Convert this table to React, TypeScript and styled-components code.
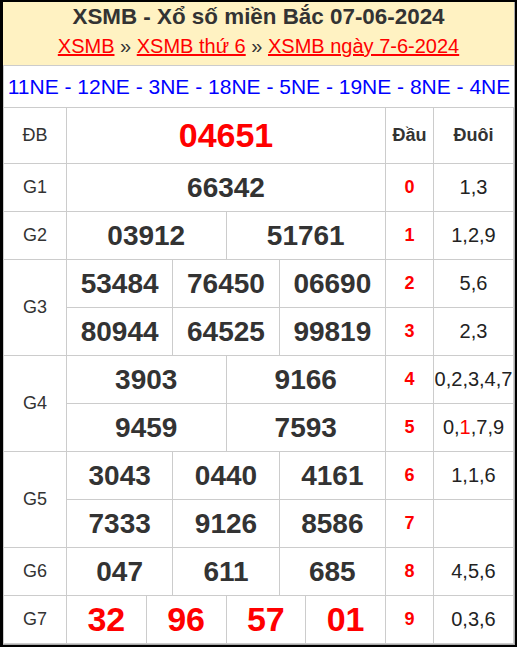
import React from "react";
import styled, { createGlobalStyle } from "styled-components";

const Global = createGlobalStyle`
  html, body { margin: 0; padding: 0; background: #000; }
  body { font-family: "Liberation Sans", Arial, sans-serif; }
  * { box-sizing: border-box; }
`;

const Frame = styled.div`
  margin: 2px 0 0 3px;
  width: 512px;
  height: 643px;
  background: #fff;
  border-right: 1px solid #aaa;
  border-bottom: 1px solid #aaa;
  overflow: hidden;
  display: flex;
  flex-direction: column;
`;

const Header = styled.div`
  height: 64px;
  background: #fff2c2;
  padding-top: 1px;
  text-align: center;
  color: #333;
`;

const Title = styled.h1`
  margin: 0;
  font-size: 22.4px;
  line-height: 28px;
  font-weight: bold;
  color: #333;
`;

const Crumbs = styled.div`
  margin-top: 2px;
  font-size: 20px;
  line-height: 26px;
  color: #333;
  white-space: nowrap;
`;

const Crumb = styled.a`
  color: #f00;
  text-decoration: underline;
`;

const Loto = styled.div`
  height: 42px;
  border-top: 1px solid #ccc;
  border-left: 1px solid #ccc;
  display: flex;
  align-items: center;
  justify-content: center;
  font-size: 21px;
  color: #0000ff;
  white-space: nowrap;
`;

const Board = styled.div`
  display: grid;
  grid-template-columns: 63px repeat(12, 1fr) 48px 80px;
  grid-template-rows: 56px repeat(10, 48px);
  border-top: 1px solid #ccc;
  border-left: 1px solid #ccc;
`;

const Cell = styled.div<{ $col: string; $row: string }>`
  grid-column: ${(p) => p.$col};
  grid-row: ${(p) => p.$row};
  border-right: 1px solid #ccc;
  border-bottom: 1px solid #ccc;
  display: flex;
  align-items: center;
  justify-content: center;
  white-space: nowrap;
  overflow: hidden;
`;

const Label = styled(Cell)`
  font-size: 18px;
  color: #333;
`;

const Num = styled(Cell)<{ $red?: boolean }>`
  font-size: ${(p) => (p.$red ? "34px" : "28px")};
  font-weight: bold;
  color: ${(p) => (p.$red ? "#f00" : "#333")};
`;

const HeadCell = styled(Cell)`
  font-size: 18px;
  font-weight: bold;
  color: #333;
`;

const Dau = styled(Cell)`
  font-size: 18px;
  font-weight: bold;
  color: #f00;
`;

const Duoi = styled(Cell)`
  font-size: 20px;
  color: #222;
`;

const Hot = styled.span`
  color: #f00;
`;

type Prize = { label: string; rows: string[][]; red?: boolean };

const prizes: Prize[] = [
  { label: "ĐB", rows: [["04651"]], red: true },
  { label: "G1", rows: [["66342"]] },
  { label: "G2", rows: [["03912", "51761"]] },
  { label: "G3", rows: [["53484", "76450", "06690"], ["80944", "64525", "99819"]] },
  { label: "G4", rows: [["3903", "9166"], ["9459", "7593"]] },
  { label: "G5", rows: [["3043", "0440", "4161"], ["7333", "9126", "8586"]] },
  { label: "G6", rows: [["047", "611", "685"]] },
  { label: "G7", rows: [["32", "96", "57", "01"]], red: true },
];

const duoi: React.ReactNode[] = [
  "1,3",
  "1,2,9",
  "5,6",
  "2,3",
  "0,2,3,4,7",
  <>
    0,<Hot>1</Hot>,7,9
  </>,
  "1,1,6",
  "",
  "4,5,6",
  "0,3,6",
];

const loto = ["11NE", "12NE", "3NE", "18NE", "5NE", "19NE", "8NE", "4NE"];

export default function App() {
  const cells: React.ReactNode[] = [];
  let row = 1;
  prizes.forEach((p) => {
    cells.push(
      <Label key={p.label} $col="1" $row={`${row} / span ${p.rows.length}`}>
        {p.label}
      </Label>
    );
    p.rows.forEach((r, ri) => {
      const span = 12 / r.length;
      r.forEach((n, ni) => {
        const start = 2 + ni * span;
        cells.push(
          <Num
            key={`${p.label}-${ri}-${ni}`}
            $col={`${start} / span ${span}`}
            $row={`${row + ri}`}
            $red={p.red}
          >
            {n}
          </Num>
        );
      });
    });
    row += p.rows.length;
  });

  return (
    <>
      <Global />
      <Frame>
        <Header>
          <Title>XSMB - Xổ số miền Bắc 07-06-2024</Title>
          <Crumbs>
            <Crumb>XSMB</Crumb> » <Crumb>XSMB thứ 6</Crumb> » <Crumb>XSMB ngày 7-6-2024</Crumb>
          </Crumbs>
        </Header>
        <Loto>{loto.join(" - ")}</Loto>
        <Board>
          {cells}
          <HeadCell $col="14" $row="1">Đầu</HeadCell>
          <HeadCell $col="15" $row="1">Đuôi</HeadCell>
          {duoi.map((d, i) => (
            <React.Fragment key={i}>
              <Dau $col="14" $row={`${i + 2}`}>{i}</Dau>
              <Duoi $col="15" $row={`${i + 2}`}>{d}</Duoi>
            </React.Fragment>
          ))}
        </Board>
      </Frame>
    </>
  );
}
